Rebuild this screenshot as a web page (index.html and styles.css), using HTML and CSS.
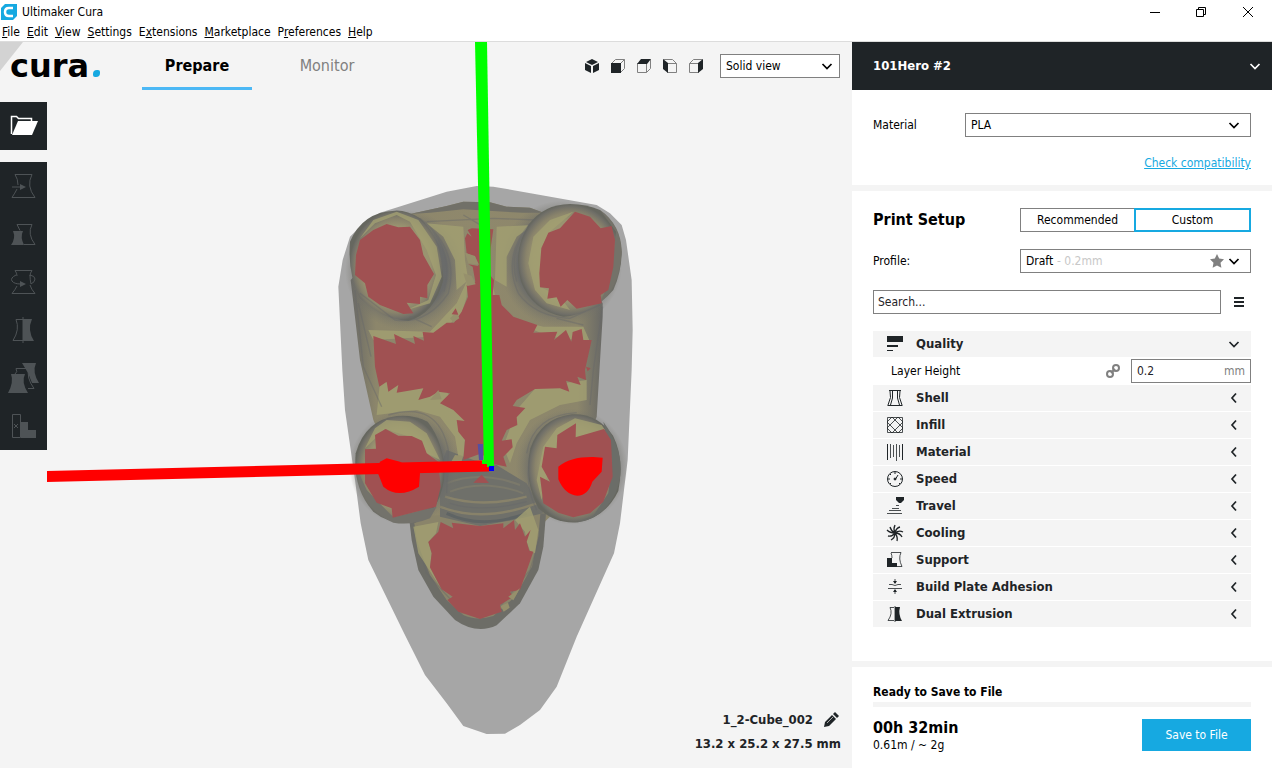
FILE: index.html
```html
<!DOCTYPE html>
<html lang="en">
<head>
    <meta charset="UTF-8">
    <title>Ultimaker Cura</title>
    <link rel="stylesheet" href="styles.css">
</head>
<body>
<svg class="defs" width="0" height="0" aria-hidden="true">
    <symbol id="down" viewBox="0 0 12 12"><path d="M1.500 4L6 8.500 10.500 4" fill="none" stroke="currentColor" stroke-width="1.700"/></symbol>
    <symbol id="left" viewBox="0 0 12 12"><path d="M8 1.500L4 6l4 4.500" fill="none" stroke="currentColor" stroke-width="1.700"/></symbol>
</svg>
<div class="window">
    <header class="titlebar">
        <svg class="app-icon" width="16" height="16" viewBox="0 0 16 16"><path d="M4 0h12v12l-4 4H0V4z" fill="#16a9e1"/><path d="M12 4H8Q4 4 4 8t4 4h4" fill="none" stroke="#fff" stroke-width="2.500"/></svg>
        <span class="app-title">Ultimaker Cura</span>
        <div class="window-buttons">
            <button type="button" aria-label="Minimize"><svg width="12" height="12"><path d="M1 6.500h10" stroke="#000"/></svg></button>
            <button type="button" aria-label="Restore"><svg width="12" height="12"><path d="M1.500 3.500h7v7h-7zM3.500 3V1.500h7v7H9" fill="none" stroke="#000"/></svg></button>
            <button type="button" aria-label="Close"><svg width="12" height="12"><path d="M1 1l10 10M11 1L1 11" stroke="#000"/></svg></button>
        </div>
    </header>
    <nav class="menubar">
        <button type="button"><u>F</u>ile</button>
        <button type="button"><u>E</u>dit</button>
        <button type="button"><u>V</u>iew</button>
        <button type="button"><u>S</u>ettings</button>
        <button type="button">E<u>x</u>tensions</button>
        <button type="button"><u>M</u>arketplace</button>
        <button type="button">P<u>r</u>eferences</button>
        <button type="button"><u>H</u>elp</button>
    </nav>

    <div class="main">
        <main class="stage">
            <svg class="scene" viewBox="0 42 852 726" preserveAspectRatio="xMidYMid slice" aria-hidden="true">
                <defs>
                    <radialGradient id="leg">
                        <stop offset="0" stop-color="#a09b70"/>
                        <stop offset=".72" stop-color="#999370"/>
                        <stop offset=".85" stop-color="#89836b"/>
                        <stop offset=".96" stop-color="#706f68"/>
                        <stop offset="1" stop-color="#66675f"/>
                    </radialGradient>
                    <radialGradient id="shade">
                        <stop offset=".7" stop-color="#66686a" stop-opacity=".9"/>
                        <stop offset="1" stop-color="#77756a" stop-opacity="0"/>
                    </radialGradient>
                    <linearGradient id="body">
                        <stop offset="0" stop-color="#696966"/>
                        <stop offset=".1" stop-color="#8c866b"/>
                        <stop offset=".5" stop-color="#8f886c"/>
                        <stop offset=".9" stop-color="#8c866b"/>
                        <stop offset="1" stop-color="#696966"/>
                    </linearGradient>
                </defs>
                <path d="M0 42h23L0 71z" fill="#d3d3d3"/>
                <!-- everything on the plate is drawn at three times its size -->
                <g transform="translate(330 170) scale(.33333)">
                    <path class="shadow" d="M440 48L490 50 800 105 840 130 875 165 888 210 905 330 908 480 905 600 893 870 882 960 870 1060 852 1150 740 1400 680 1550 630 1620 570 1665 525 1691 470 1692 400 1668 350 1600 285 1515 220 1385 115 1170 92 1060 75 930 45 720 37 600 25 350 38 270 60 200 100 160 150 128 350 65z"/>
                    <path d="M240 132L350 108 400 95 480 97 530 110 600 113 660 135 818 400 818 440 800 740 700 1000 640 1060 300 1060 240 1000 130 750 90 570 62 330z" fill="url(#body)"/>
                    <path d="M240 132L350 108 400 95 480 97 530 110 600 113 640 128 580 128 500 124 400 118 300 128z" fill="#717068"/>
                    <!-- tail -->
                    <path d="M238 1050L245 1110 265 1200 310 1280 375 1350Q440 1395 500 1366L570 1300 625 1200 640 1130 648 1030z" fill="#6d6d67"/>
                    <path d="M250 1040L262 1120 300 1215 350 1290 400 1335Q440 1354 490 1338L555 1280 606 1190 625 1100 632 1020z" fill="#8a846a"/>
                    <path d="M330 890L350 840 430 870 500 885 590 940 640 1030 560 1048 450 1068 330 1040z" fill="#6f706a"/>
                    <path d="M345 980Q455 1015 590 980M330 1010Q455 1060 620 1000" fill="none" stroke="#88826a" stroke-width="7"/>
                    <path d="M350 940Q450 900 570 945M360 965Q460 925 580 970" fill="none" stroke="#7b796b" stroke-width="6"/>
                    <path d="M350 1030Q455 1080 590 1030" fill="none" stroke="#5f6464" stroke-width="9"/>
                    <!-- leg shades -->
                    <ellipse cx="225" cy="300" rx="180" ry="180" fill="url(#shade)"/>
                    <ellipse cx="693" cy="282" rx="184" ry="190" fill="url(#shade)"/>
                    <ellipse cx="225" cy="892" rx="167" ry="172" fill="url(#shade)"/>
                    <ellipse cx="725" cy="890" rx="168" ry="174" fill="url(#shade)"/>
                    <!-- bright faces between the legs -->
                    <path class="light" d="M115 480L300 485 380 400 412 330 410 380 395 430 350 470 300 500 130 510zM485 330L500 400 560 450 640 470 760 470 780 515 660 500 540 450 490 380zM150 635L340 650 410 755 400 860 385 860 375 800 330 740 260 720 140 735zM520 830L560 720 620 650 770 630 770 690 690 705 600 750 560 820 540 880z"/>
                    <path class="light" d="M290 160L400 170 405 270 415 330 380 360 375 270 340 200zM500 170L610 165 560 200 530 260 530 350 495 330z" opacity=".45"/>
                    <!-- underside of the body -->
                    <path class="over" d="M130 498L198 522 192 492 255 522 250 498 282 512 278 486 310 488 350 458 372 458 395 425 414 380 410 345 436 335 428 290 415 283 445 288 435 260 410 250 405 205 412 190 425 200 413 180 425 175 490 178 482 235 480 315 492 330 488 375 508 375 515 405 550 440 622 465 610 488 682 485 672 510 708 480 724 515 728 486 755 477 760 510 785 510 765 600 768 630 742 620 752 645 708 632 718 665 690 655 615 657 560 690 548 708 586 714 560 742 562 765 530 780 515 812 545 808 548 832 520 860 530 890 480 880 455 850 400 870 405 810 385 785 380 750 404 753 370 720 330 700 360 670 325 665 300 680 265 690 280 655 200 668 205 645 175 665 170 635 148 650 135 590z"/>
                    <path class="facet" d="M400 310l25 8 12 25-25 5zM405 248l30 10 12 26-32 -4zM360 445l20-20 8 20-18 12zM300 690l25-30 10 28zM375 855l25 3-5 15h-30z"/>
                    <path class="over" d="M768 590l14 5-9 9zM430 938l25-24 22 25zM365 433l12-18 8 19z"/>
                    <!-- four legs -->
                    <path d="M195 122Q98 125 60 215 52 310 90 385 160 450 235 453 315 430 340 330 335 200 270 145 230 120 195 122z" fill="url(#leg)"/>
                    <path d="M720 102Q640 103 595 165 548 240 573 335 605 420 700 440 785 435 850 360 875 305 875 245 870 165 810 120 770 102 720 102z" fill="url(#leg)"/>
                    <path d="M200 738Q105 750 77 850 68 955 130 1025 180 1066 255 1058 325 1034 342 930 348 825 293 755 250 733 200 738z" fill="url(#leg)"/>
                    <path d="M725 733Q632 745 601 835 580 930 625 1015 676 1063 745 1057 825 1044 865 963 884 865 849 797 800 728 725 733z" fill="url(#leg)"/>
                    <path class="light" d="M90 205L135 160 200 135 240 155 290 240 318 315 295 390 230 420 300 400 335 320 320 230 265 150 200 125 130 150zM730 125L660 150 610 200 595 280 615 360 650 400 720 420 690 380 630 350 635 230 660 185z"/>
                    <path class="light" d="M105 835L135 775 170 750 240 755 290 790 320 850 330 870 290 850 270 810 165 777zM640 830L680 775 735 745 815 765 825 780 740 800 690 830 660 880 635 990 620 930z"/>
                    <path d="M820 755Q900 865 857 970 815 1050 740 1057L790 1037 835 970 846 875z" fill="#6b6d68"/>
                    <path d="M78 890Q92 1015 190 1058 245 1067 300 1045L320 1010 190 1042 110 960z" fill="#73726b"/>
                    <path d="M810 120Q874 165 875 245 870 345 815 390L830 350 852 240 858 185z" fill="#747269"/>
                    <!-- mesh lines -->
                    <g fill="none" stroke="#68696a" stroke-width="4" opacity=".45">
                        <path d="M270 145Q390 240 355 370 290 465 195 450L90 370M285 155Q375 245 342 365M600 160Q515 260 565 370 615 440 720 445L810 405M590 180Q535 250 560 335"/>
                        <path d="M175 735Q325 690 355 840L350 970M590 850Q610 735 740 728M598 870Q585 950 620 1020M360 1000Q455 1030 590 995"/>
                        <path d="M75 360L100 590 155 710M85 400L123 560M818 410L790 600 780 705M290 155L490 145 615 150M400 135L460 170"/>
                        <path d="M250 1080L290 1210 400 1330M630 1100L600 1200 510 1310M240 440L305 470M680 445L760 465"/>
                    </g>
                    <path class="over" d="M90 210L130 180 170 162 205 172 240 170 270 210 280 255 312 312 292 345 292 385 270 380 270 402 230 398 250 430 220 432 150 405 115 380 105 340 75 315 78 255z"/>
                    <path class="over" d="M735 125L780 140 812 175 845 168 855 210 850 290 835 360 812 375 815 400 740 416 712 390 692 410 680 382 652 386 657 355 630 352 628 310 634 235 655 188 690 175z"/>
                    <path class="over" d="M135 795L167 777 205 797 245 798 276 812 290 850 325 875 332 950 318 1010 188 1043 185 1015 140 998 105 940 105 838 138 836z"/>
                    <path class="over" d="M682 795L738 760 737 802 822 777 843 810 848 920 820 995 780 1030 730 1042 685 1028 640 1000 630 920 660 935 635 890 645 830 680 835z"/>
                    <path class="light" d="M250 1070L325 1056 318 1090 295 1116 305 1150 300 1192 330 1250 265 1150zM555 1050L600 1010 625 1080 615 1150 600 1142 590 1115 585 1085z" opacity=".6"/>
                    <path class="over" d="M325 1085L332 1056 370 1075 365 1058 450 1068 520 1060 520 1075 552 1050 555 1080 570 1060 585 1100 602 1080 590 1115 598 1142 610 1145 570 1260 540 1265 550 1280 510 1305 515 1325 450 1347 385 1325 352 1290 368 1280 335 1258 300 1192 305 1150 295 1116z"/>
                    <path class="facet" d="M535 1280l35-25-20 36zM512 1308l22-10 5 15-18 12z"/>
                    <path d="M150 875L170 865 210 875 270 910 267 950Q205 988 160 950L140 900zM685 890Q720 860 790 861L818 863 815 905 787 935Q775 975 742 977 705 975 685 928z" fill="#f00"/>
                    <path d="M443 822h16v48h-12z" fill="#5650a0"/>
                </g>
                <path d="M475 42h12l7 427-10-3z" fill="#0f0"/>
                <path d="M47 471L482 460.500l7 3v8L47 482z" fill="#f00"/>
                <path d="M482 460h12v7h-7v-3h-5z" fill="#0f0"/>
                <path d="M489 466h5v5h-5z" fill="#00f"/>
            </svg>

            <div class="topbar">
                <h1 class="logo">cura<span class="logo-dot"></span></h1>
                <div class="tabs">
                    <button type="button" class="tab active">Prepare</button>
                    <button type="button" class="tab">Monitor</button>
                </div>
                <div class="cameras">
                    <button type="button" aria-label="3D view"><svg viewBox="0 0 14 14"><path d="M7 0l6 3-6 3-6-3zM0 4l6 3v7l-6-3zM14 4L8 7v7l6-3z" fill="#1f2427"/></svg></button>
                    <button type="button" aria-label="Front view"><svg viewBox="0 0 14 14"><path d="M.5 4.500l4-4h9v9l-4 4M9.500 4.500l4-4" class="edge"/><path d="M0 4h10v10H0z" fill="#1f2427"/></svg></button>
                    <button type="button" aria-label="Top view"><svg viewBox="0 0 14 14"><path d="M.5 4.500h9v9h-9zM9.500 13.500l4-4v-9" class="edge"/><path d="M0 5l4-5h10l-4 5z" fill="#1f2427"/></svg></button>
                    <button type="button" aria-label="Left view"><svg viewBox="0 0 14 14"><path d="M4.500 4.500h9v9h-9zM.5.5h9l4 4" class="edge"/><path d="M0 0l5 4v10l-5-4z" fill="#1f2427"/></svg></button>
                    <button type="button" aria-label="Right view"><svg viewBox="0 0 14 14"><path d="M.5 4.500h9v9h-9zM.5 4.500l4-4h9" class="edge"/><path d="M14 0v10l-5 4V4z" fill="#1f2427"/></svg></button>
                </div>
                <div class="combo view-mode">
                    <select aria-label="View mode"><option>Solid view</option></select>
                    <svg class="arrow"><use href="#down"/></svg>
                </div>
            </div>

            <div class="toolbars">
                <div class="toolbar">
                    <button type="button" aria-label="Open file"><svg viewBox="0 0 28 28"><path d="M1.500 22V4.500h5l2 2h13V10" fill="none" stroke="#fff" stroke-width="1.500"/><path d="M8 9h20l-6 14H2z" fill="#fff"/></svg></button>
                </div>
                <div class="toolbar tools">
                    <button type="button" aria-label="Move"><svg viewBox="0 0 28 28"><path class="line" d="M5 2.500h17Q16 14 25 25.500H2Q5 21 7 17M8 13Q8 7 5 2.500M2 15h9"/><path class="fill" d="M10 12l6 3-6 3z"/></svg></button>
                    <button type="button" aria-label="Scale"><svg viewBox="0 0 28 28"><path class="line" d="M7 4.500h15Q17 14 25 24.500H14M7 4.500l3 6"/><path class="fill" d="M3 11h10q-3 6 1 14H1q5-7 2-14z"/></svg></button>
                    <button type="button" aria-label="Rotate"><svg viewBox="0 0 28 28"><path class="line" d="M7 8Q7 5 5 2.500h17Q20 5 20 8M7 18Q5 22 2 25.500h23Q21 21 20 17M6 7q-6 3-4 6 2 3 9 3M20 7q5 1 5 4t-4 5q-1-4-1-9"/><path class="fill" d="M10 13l6 3-6 3z"/></svg></button>
                    <button type="button" aria-label="Mirror"><svg viewBox="0 0 28 28"><path class="line" d="M13 1v26M13 3.500H6q4 10-3 21h10"/><path class="fill" d="M13 3h9q-5 11 2 22H13z"/></svg></button>
                    <button type="button" aria-label="Per model settings"><svg viewBox="0 0 28 28"><path class="fill" d="M12-1h14q-4 9 3 20h-7L18 9zM1 10h14q-4 8 3 19h-20q6-11 3-19z"/><path class="line" d="M5 10Q8 8 6 4.500h13q-3 9 5 20h-6"/></svg></button>
                    <button type="button" aria-label="Support blocker"><svg viewBox="0 0 28 28"><path class="line" d="M2.500 2.500h8v23h-8zM4 12l4 4M8 12l-4 4"/><path class="fill" d="M11 10h7v8h8v8H11z"/></svg></button>
                </div>
            </div>

            <footer class="model-info">
                <div class="model-name">1_2-Cube_002
                    <button type="button" aria-label="Rename"><svg width="16" height="16"><path d="M1 15l1-5 7-7 4 4-7 7zM10 2l2-2 4 4-2 2z" fill="#1f2427"/><path d="M4 11l6-6" stroke="#aaa"/></svg></button>
                </div>
                <div class="model-size">13.2 x 25.2 x 27.5 mm</div>
            </footer>
        </main>

        <aside class="sidebar">
            <button type="button" class="machine">101Hero #2 <svg class="arrow"><use href="#down"/></svg></button>

            <section class="material">
                <div class="row">
                    <label for="material">Material</label>
                    <div class="combo material-combo">
                        <select id="material"><option>PLA</option></select>
                        <svg class="arrow"><use href="#down"/></svg>
                    </div>
                </div>
                <a href="#compatibility">Check compatibility</a>
            </section>

            <section class="setup">
                <div class="row">
                    <h2>Print Setup</h2>
                    <div class="switch">
                        <button type="button">Recommended</button>
                        <button type="button" class="active">Custom</button>
                    </div>
                </div>
                <div class="row profile">
                    <label for="profile">Profile:</label>
                    <div class="combo profile-combo">
                        <select id="profile"><option>Draft</option></select>
                        <span class="detail">- 0.2mm</span>
                        <svg class="star" viewBox="0 0 14 14"><path d="M7 0l2.200 4.500 4.800.7-3.500 3.500.9 5.100L7 11.400l-4.400 2.400.9-5.100L0 5.200l4.800-.7z" fill="#808080"/></svg>
                        <svg class="arrow"><use href="#down"/></svg>
                    </div>
                </div>
                <div class="row search">
                    <input type="text" placeholder="Search..." aria-label="Search settings">
                    <button type="button" aria-label="Setting visibility"><svg width="12" height="12"><path d="M1 2h10M1 6h10M1 10h10" stroke="#1f2427" stroke-width="2"/></svg></button>
                </div>

                <div class="settings">
                    <button type="button" class="category"><svg class="icon" viewBox="0 0 16 16"><path d="M0 0h16v6H0zM0 9h11v2H0zM0 14h6v1H0z" fill="#1f2427" stroke="none"/></svg>Quality<svg class="arrow"><use href="#down"/></svg></button>
                    <div class="setting">
                        <label for="layer-height">Layer Height</label>
                        <svg width="14" height="14" class="link"><circle cx="4" cy="10" r="3"/><circle cx="10" cy="4" r="3"/><path d="M5 9l4-4"/></svg>
                        <div class="value">
                            <input type="text" id="layer-height" value="0.2">
                            <span>mm</span>
                        </div>
                    </div>
                    <button type="button" class="category"><svg class="icon" viewBox="0 0 16 16"><path d="M2 .5h12M.5 15.500h15M3 1q2 6-2 14M13 1q-2 6 2 14M5.500 1q1 7-2 14M10.500 1q-1 7 2 14"/></svg>Shell<svg class="arrow"><use href="#left"/></svg></button>
                    <button type="button" class="category"><svg class="icon" viewBox="0 0 16 16"><path d="M.5.5h15v15H.5zM0 5l5-5M0 11L11 0M5 16L16 5M11 16l5-5M11 0l5 5M5 0l11 11M0 5l11 11M0 11l5 5" stroke-width=".8"/></svg>Infill<svg class="arrow"><use href="#left"/></svg></button>
                    <button type="button" class="category"><svg class="icon" viewBox="0 0 16 16"><path d="M.5 0v16M15.500 0v16"/><path d="M3.500 0v14M6.500 1v12M9.500 0v17M12.500 1v12" stroke-width=".8"/></svg>Material<svg class="arrow"><use href="#left"/></svg></button>
                    <button type="button" class="category"><svg class="icon" viewBox="0 0 16 16"><circle cx="8" cy="8" r="7.500"/><path d="M8 1v2M1 8h2M13 8h2M3 3l1 1M3 13l1-1M13 13l-1-1M8 9l3-5"/><circle cx="8" cy="8" r="1" fill="#1f2427"/></svg>Speed<svg class="arrow"><use href="#left"/></svg></button>
                    <button type="button" class="category"><svg class="icon" viewBox="0 0 16 16"><path d="M9-1h8v3l-3 3h-2L9 2z" fill="#1f2427" stroke="none"/><path d="M9 7.500h3M5 10.500h7M2 12.500h12M0 15.500h15" stroke-width=".8"/></svg>Travel<svg class="arrow"><use href="#left"/></svg></button>
                    <button type="button" class="category"><svg class="icon" viewBox="0 0 16 16"><path d="M8 8Q6 4 8 0M8 8q1-5 5-6M8 8q4-3 8-1M8 8q5 0 7 4M8 8q3 4 2 8M8 8q0 5-4 7M8 8q-3 4-7 3M8 8Q3 8 0 5M8 8Q4 6 3 2" stroke-width="1.300"/></svg>Cooling<svg class="arrow"><use href="#left"/></svg></button>
                    <button type="button" class="category"><svg class="icon" viewBox="0 0 16 16"><path d="M4 .5h10q-3 6 1 14H9M4 1q1 2 1 5" stroke-width=".8"/><path d="M0 6h5v5h5v4H0z" fill="#1f2427" stroke="none"/></svg>Support<svg class="arrow"><use href="#left"/></svg></button>
                    <button type="button" class="category"><svg class="icon" viewBox="0 0 16 16"><path d="M2 5.500h3l3 1 3-1h3M1 9.500h14M8 0v4M8 11v4" stroke-width=".8"/><path d="M6 2h4L8 5zM6 13h4l-2-3z" fill="#1f2427" stroke="none"/></svg>Build Plate Adhesion<svg class="arrow"><use href="#left"/></svg></button>
                    <button type="button" class="category"><svg class="icon" viewBox="0 0 16 16"><path d="M8 0v16M7 1.500H3q3 6-2 13h6" stroke-width=".8"/><path d="M8 1h5q-2 7 2 14H8z" fill="#1f2427" stroke="none"/></svg>Dual Extrusion<svg class="arrow"><use href="#left"/></svg></button>
                </div>
            </section>

            <section class="output">
                <h3>Ready to Save to File</h3>
                <div class="progress"></div>
                <div class="row">
                    <div>
                        <div class="time">00h 32min</div>
                        <div class="usage">0.61m / ~ 2g</div>
                    </div>
                    <button type="button" class="save">Save to File</button>
                </div>
            </section>
        </aside>
    </div>
</div>
</body>
</html>
```
FILE: styles.css
```css
* {
    box-sizing: border-box;
}

body {
    margin: 0;
    background: #fff;
    color: #000;
    font-family: "DejaVu Sans Condensed", "Noto Sans", sans-serif;
    font-size: 12px;
    line-height: 16px;
}

button, input, select {
    margin: 0;
    padding: 0;
    border: none;
    border-radius: 0;
    background: none;
    color: inherit;
    font: inherit;
}

button {
    cursor: pointer;
}

h1, h2, h3 {
    margin: 0;
}

svg {
    display: block;
    flex-shrink: 0;
}

.defs {
    position: absolute;
}

.window {
    display: flex;
    flex-direction: column;
    min-height: 100vh;
}

/* Title bar and menu */
.titlebar {
    display: flex;
    align-items: center;
    height: 23px;
    padding-left: 1px;
}

.app-title {
    margin-left: 5px;
}

.window-buttons {
    display: flex;
    margin-left: auto;
}

.window-buttons button {
    display: grid;
    place-items: center;
    width: 46px;
    height: 20px;
}

.window-buttons button:last-child {
    width: 48px;
}

.menubar {
    display: flex;
    gap: 7px;
    height: 19px;
    padding: 0 2px;
    border-bottom: 1px solid #dcdcdc;
}

/* Two columns: the 3D view and the sidebar */
.main {
    display: flex;
    flex: 1;
}

.stage {
    display: flex;
    flex: 1;
    flex-direction: column;
    position: relative;
    min-width: 0;
    background: #f4f4f4;
}

.scene {
    position: absolute;
    width: 100%;
    height: 100%;
}

.shadow {
    fill: #a6a6a6;
}

.over {
    fill: #a05152;
}

.facet {
    fill: #96906c;
}

.light {
    fill: #a3a072;
    opacity: .8;
}

.topbar, .toolbars, .model-info {
    z-index: 1;
}

.topbar {
    display: flex;
    align-items: center;
    height: 48px;
    padding: 0 12px 0 10px;
}

.logo {
    display: flex;
    align-items: baseline;
    width: 132px;
    font-family: "DejaVu Sans", sans-serif;
    font-size: 32px;
    font-weight: bold;
    line-height: 40px;
}

.logo-dot {
    width: 7px;
    height: 7px;
    margin-left: 4px;
    border-radius: 4px 2px 4px 2px;
    background: #16a9e1;
}

.tabs {
    display: flex;
    gap: 20px;
    height: 100%;
}

.tab {
    width: 110px;
    padding-top: 3px;
    border-bottom: 3px solid transparent;
    color: #808080;
    font-size: 16px;
}

.tab.active {
    border-color: #4cb8f5;
    color: #000;
    font-weight: bold;
}

.cameras {
    display: flex;
    gap: 12px;
    margin-left: auto;
}

.cameras svg {
    width: 14px;
    height: 14px;
}

.edge {
    fill: none;
    stroke: #808080;
}

/* Drop-downs: the arrow shares the grid cell with the select */
.combo {
    display: grid;
    grid-template-areas: "box";
    align-items: center;
    height: 24px;
    border: 1px solid #808080;
    background: #fff;
}

.combo > * {
    grid-area: box;
}

.combo select {
    width: 100%;
    height: 100%;
    padding: 0 5px;
    appearance: none;
}

.arrow {
    width: 12px;
    height: 12px;
    pointer-events: none;
}

.combo .arrow {
    justify-self: end;
    margin-right: 10px;
}

.view-mode {
    width: 120px;
    margin-left: 17px;
}

.view-mode .arrow {
    margin-right: 6px;
}

/* Tools at the left */
.toolbars {
    display: flex;
    flex-direction: column;
    gap: 12px;
    align-items: flex-start;
    margin-top: 12px;
}

.toolbar {
    display: flex;
    flex-direction: column;
    background: #1f2427;
}

.toolbar button {
    display: grid;
    place-items: center;
    width: 47px;
    height: 48px;
}

.toolbar svg {
    width: 28px;
    height: 28px;
    overflow: visible;
}

.line {
    fill: none;
    stroke: #4e5356;
}

.fill {
    fill: #4e5356;
}

.model-info {
    margin-top: auto;
    padding: 0 11px 14px;
    color: #1f2427;
    font-size: 13px;
    font-weight: bold;
    line-height: 20px;
    text-align: right;
}

.model-name {
    display: flex;
    justify-content: flex-end;
    align-items: center;
    gap: 10px;
    margin-bottom: 4px;
    padding-right: 2px;
}

/* Sidebar */
.sidebar {
    display: flex;
    flex: 0 0 420px;
    flex-direction: column;
    background: #fff;
}

.machine {
    display: flex;
    justify-content: space-between;
    align-items: center;
    height: 48px;
    padding: 0 11px 0 21px;
    background: #1f2427;
    color: #fff;
    font-size: 13px;
    font-weight: bold;
}

.sidebar section {
    padding: 0 21px;
}

.row {
    display: flex;
    justify-content: space-between;
    align-items: center;
}

.sidebar .material {
    display: flex;
    flex-direction: column;
    padding-top: 23px;
    padding-bottom: 14px;
    border-bottom: 6px solid #f4f4f4;
}

.material-combo {
    width: 286px;
}

.material a {
    align-self: flex-end;
    margin-top: 18px;
    color: #16a9e1;
}

.sidebar .setup {
    padding-top: 17px;
}

.setup h2 {
    font-size: 16px;
    font-weight: bold;
}

.switch {
    display: flex;
    width: 231px;
    height: 24px;
}

.switch button {
    flex: 1;
    border: 1px solid #808080;
    border-right: none;
}

.switch .active {
    border: 2px solid #16a9e1;
}

.profile {
    margin-top: 17px;
}

.profile-combo {
    width: 231px;
}

.detail {
    margin-left: 36px;
    color: #c8c8c8;
    pointer-events: none;
}

.star {
    justify-self: end;
    width: 14px;
    height: 14px;
    margin-right: 26px;
    pointer-events: none;
}

.search {
    gap: 12px;
    margin-top: 17px;
}

.search input {
    flex: 1;
    height: 24px;
    padding: 0 4px;
    border: 1px solid #808080;
}

.search input::placeholder {
    color: #1f2427;
}

.search button {
    margin-right: 6px;
}

.settings {
    display: flex;
    flex-direction: column;
    gap: 1px;
    margin-top: 17px;
}

.category {
    display: flex;
    align-items: center;
    height: 26px;
    padding: 0 11px 0 14px;
    background: #f4f4f4;
    color: #1f2427;
    font-size: 13px;
    font-weight: bold;
}

.category .arrow {
    margin-left: auto;
}

.icon {
    width: 16px;
    height: 16px;
    margin-right: 13px;
    fill: none;
    stroke: #1f2427;
    overflow: visible;
}

.setting {
    display: flex;
    align-items: center;
    height: 26px;
    padding-left: 18px;
}

.link {
    margin: 0 11px 0 auto;
    fill: none;
    stroke: #808080;
    stroke-width: 2;
}

.value {
    display: flex;
    align-items: center;
    width: 120px;
    height: 24px;
    padding: 0 5px;
    border: 1px solid #808080;
    color: #1f2427;
}

.value input {
    flex: 1;
    min-width: 0;
}

.value span {
    color: #808080;
}

.sidebar .output {
    margin-top: auto;
    padding-top: 16px;
    padding-bottom: 14px;
    border-top: 6px solid #f4f4f4;
}

.output h3 {
    font-size: 12px;
    line-height: 18px;
}

.progress {
    height: 5px;
    margin: 1px 0 12px;
    background: #f4f4f4;
}

.output .row {
    align-items: flex-start;
}

.time {
    font-size: 16px;
    font-weight: bold;
    line-height: 18px;
}

.save {
    width: 109px;
    height: 32px;
    margin-bottom: 3px;
    background: #16a9e1;
    color: #fff;
}
```
